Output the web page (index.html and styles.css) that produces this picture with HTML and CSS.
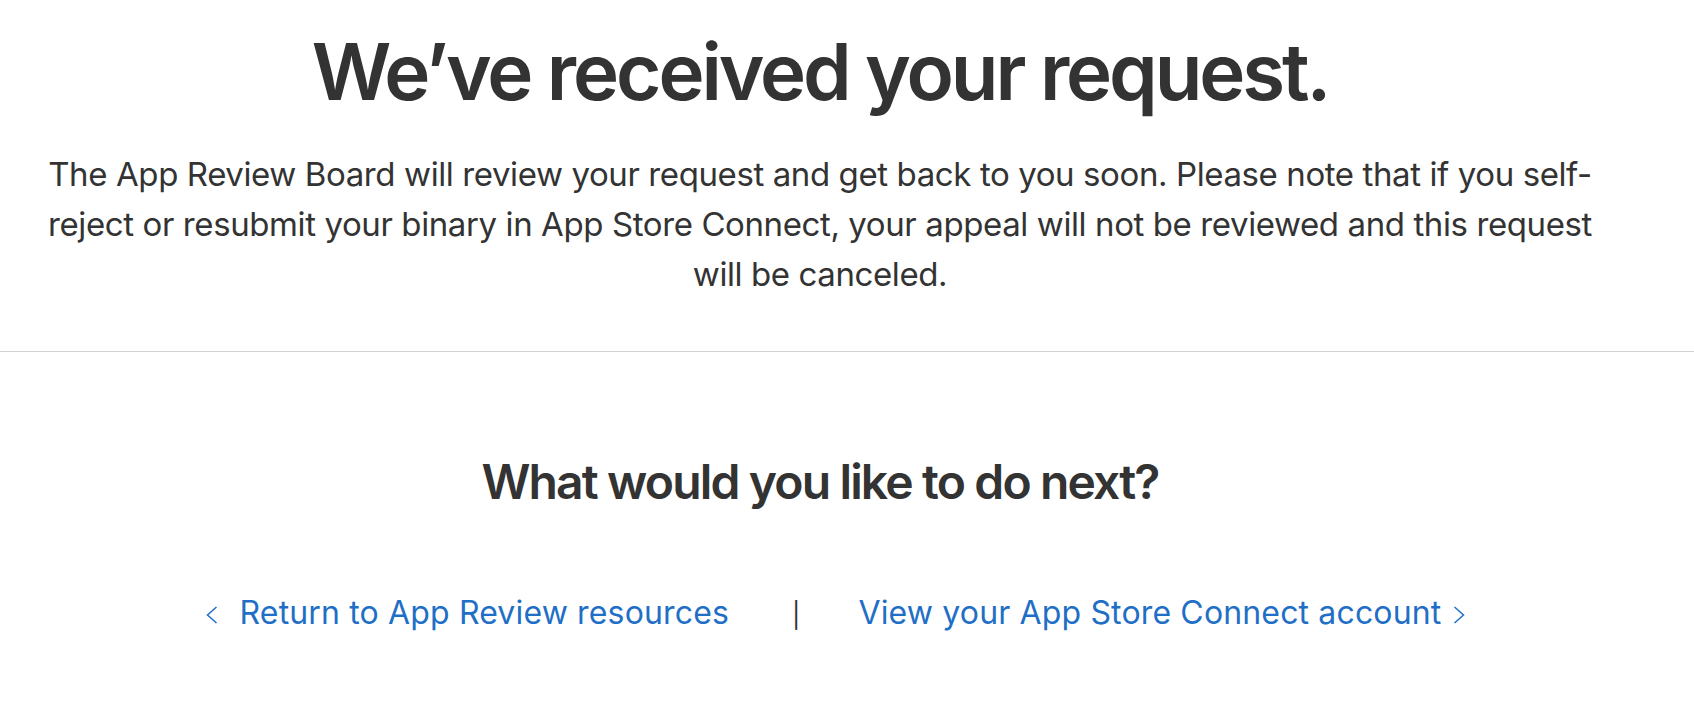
FILE: index.html
```html
<!DOCTYPE html>
<html lang="en">
<head>
<meta charset="utf-8">
<title>We’ve received your request.</title>
<link rel="stylesheet" href="styles.css">
</head>
<body>
<main class="page">
  <section class="confirm">
    <h1 class="confirm-title">We’ve received your request.</h1>
    <p class="confirm-text">The App Review Board will review your request and get back to you soon. Please note that if you self-reject or resubmit your binary in App Store Connect, your appeal will not be reviewed and this request will be canceled.</p>
  </section>
  <hr class="divider">
  <section class="next">
    <h2 class="next-title">What would you like to do next?</h2>
    <nav class="next-links">
      <a class="link link-back" href="#">
        <svg class="chev" width="12" height="18" viewBox="0 0 12 18" aria-hidden="true"><polyline points="10.5,1 1.5,9 10.5,17" fill="none" stroke="currentColor" stroke-width="1.5"/></svg>
        <span>Return to App Review resources</span>
      </a>
      <span class="sep">|</span>
      <a class="link link-fwd" href="#">
        <span>View your App Store Connect account</span>
        <svg class="chev" width="12" height="18" viewBox="0 0 12 18" aria-hidden="true"><polyline points="1.5,1 10.5,9 1.5,17" fill="none" stroke="currentColor" stroke-width="1.5"/></svg>
      </a>
    </nav>
  </section>
</main>
</body>
</html>
```
FILE: styles.css
```css
html, body {
  margin: 0;
  padding: 0;
  background: #fff;
}
body {
  font-family: Inter, "Noto Sans", sans-serif;
  color: #333;
  overflow: hidden;
}
.page {
  width: 1694px;
}
.confirm {
  width: 1640px;
  padding-top: 29px;
  text-align: center;
}
.confirm-title {
  margin: 0;
  font-size: 78px;
  line-height: 86px;
  font-weight: 600;
  letter-spacing: -3.1px;
}
.confirm-text {
  margin: 34px auto 0;
  width: 1572px;
  font-size: 33px;
  line-height: 50px;
  font-weight: 400;
  letter-spacing: -0.4px;
}
.divider {
  margin: 52px 0 0;
  border: 0;
  height: 1px;
  background: #d2d2d2;
}
.next {
  width: 1640px;
  text-align: center;
}
.next-title {
  margin: 101px 0 0;
  font-size: 48px;
  line-height: 58px;
  font-weight: 600;
  letter-spacing: -1.85px;
}
.next-links {
  margin-top: 80px;
  padding-left: 31px;
  display: flex;
  justify-content: center;
  align-items: center;
  font-size: 32px;
  line-height: 40px;
  letter-spacing: 0.15px;
}
.link {
  display: flex;
  align-items: center;
  color: #1f6fc6;
  text-decoration: none;
}
.link-back { gap: 22px; }
.link-fwd { gap: 12px; }
.chev { display: block; margin-top: 3px; }
.sep {
  margin: 4px 58px 0 63px;
  color: #333;
  font-size: 25px;
  line-height: 40px;
}
```
